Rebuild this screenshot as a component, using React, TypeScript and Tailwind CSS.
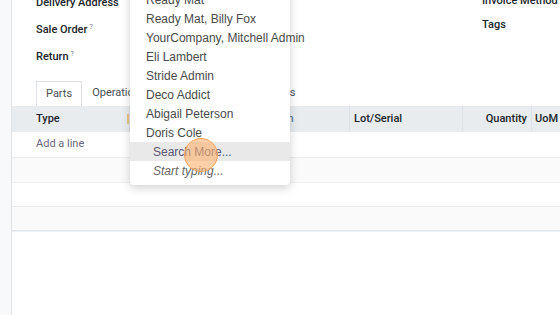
import React from 'react';

const partners = [
  'Ready Mat',
  'Ready Mat, Billy Fox',
  'YourCompany, Mitchell Admin',
  'Eli Lambert',
  'Stride Admin',
  'Deco Addict',
  'Abigail Peterson',
  'Doris Cole',
];

const tabs = ['Parts', 'Operations', 'Extra Info', 'Repair Notes'];

function Help() {
  return <sup className="ml-[2px] text-[7px] font-normal text-[#6c757d]">?</sup>;
}

export default function App() {
  return (
    <div className="relative flex h-[315px] w-[560px] overflow-hidden bg-white font-['Roboto',sans-serif] text-[11px] text-[#212529]">
      {/* left gutter */}
      <div className="w-[12px] shrink-0 border-r border-[#dee2e6] bg-[#f8f9fa]" />

      <div className="flex min-w-0 flex-1 flex-col">
        {/* form fields */}
        <div className="flex">
          <div className="-mt-[10px] flex w-[470px] flex-col pl-[24px] font-medium">
            <div className="flex h-[27px] items-center">Delivery Address</div>
            <div className="flex h-[27px] items-center">
              Sale Order
              <Help />
            </div>
            <div className="flex h-[27px] items-center">
              Return
              <Help />
            </div>
          </div>
          <div className="-mt-[11px] flex flex-col font-medium">
            <div className="flex h-[24px] items-center whitespace-nowrap">Invoice Method</div>
            <div className="flex h-[24px] items-center">Tags</div>
          </div>
        </div>

        {/* tabs */}
        <div className="mt-[10px] flex h-[25px] pl-[24px]">
          {tabs.map((t, i) => (
            <div
              key={t}
              className={
                i === 0
                  ? 'flex items-center border border-b-0 border-[#dee2e6] bg-white px-[9px] text-[#495057]'
                  : 'flex items-center border border-transparent px-[9px] text-[#495057]'
              }
            >
              {t}
            </div>
          ))}
        </div>

        {/* table */}
        <div className="flex h-[26px] items-center bg-[#e9ecef] font-medium">
          <div className="relative flex h-full w-[117px] items-center pl-[24px]">
            Type
            <span className="absolute right-0 top-[8px] h-[10px] w-[2px] bg-[#e8c48a]" />
          </div>
          <div className="flex h-full w-[114px] items-center border-l border-[#dee2e6] pl-[4px]">Product</div>
          <div className="flex h-full w-[106px] items-center pl-[8px] text-[#5b7a9a]">Location</div>
          <div className="flex h-full w-[113px] items-center border-l border-[#dee2e6] pl-[4px]">Lot/Serial</div>
          <div className="flex h-full w-[69px] items-center justify-end border-l border-[#dee2e6] pr-[4px]">Quantity</div>
          <div className="flex h-full flex-1 items-center border-l border-[#dee2e6] pl-[3px]">UoM</div>
        </div>
        <div className="flex h-[25px] items-center pl-[24px] text-[#6a6780]">Add a line</div>
        <div className="h-[25px] border-t border-[#ececec] bg-[#fafafa]" />
        <div className="h-[24px] border-t border-[#f0f0f0] bg-white" />
        <div className="h-[24px] border-t border-[#ececec] bg-[#fafafa]" />
        <div className="h-[2px] border-t border-[#e2e6ea] bg-[#eef1f4]" />
      </div>

      {/* autocomplete dropdown */}
      <div className="absolute left-[130px] top-[-10px] w-[160px] rounded-b-[4px] bg-white pb-[5px] font-['Liberation_Sans',Arial,sans-serif] text-[12px] text-[#4a4a4a] shadow-[0_3px_10px_rgba(0,0,0,0.18)]">
        {partners.map(p => (
          <div key={p} className="flex h-[19px] items-center whitespace-nowrap pl-[16px]">
            {p}
          </div>
        ))}
        <div className="flex h-[19px] items-center bg-[#e9e9e9] pl-[23px] text-[#5d5873]">Search More...</div>
        <div className="flex h-[19px] items-center pl-[23px] italic text-[#666]">Start typing...</div>
      </div>

      {/* click highlight */}
      <div className="absolute left-[184px] top-[138px] h-[34px] w-[34px] rounded-full border border-[#f6a560] bg-[#fbb06e]/60" />
    </div>
  );
}
